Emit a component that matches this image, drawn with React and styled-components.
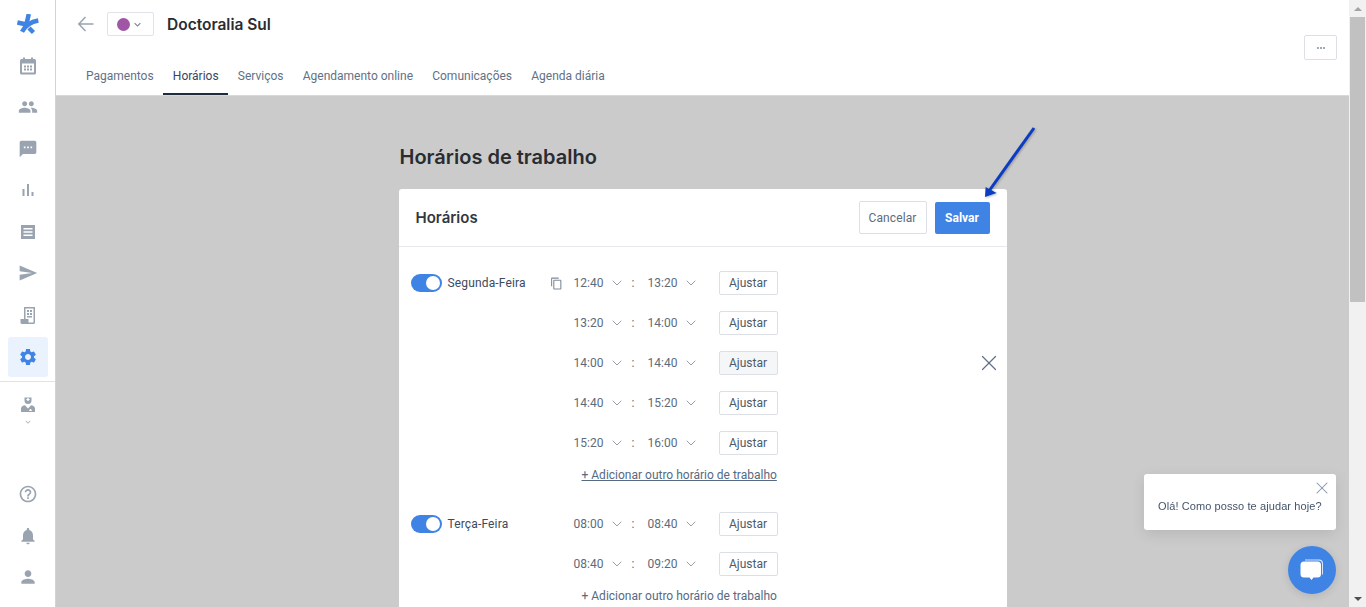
import React from "react";
import styled, { createGlobalStyle } from "styled-components";
import { ChevronDown, X } from "lucide-react";
import {
  MdContentCopy,
  MdExpandMore,
  MdHelpOutline,
  MdMoreHoriz,
  MdNotifications,
  MdPeople,
  MdPerson,
  MdSend,
  MdSettings,
  MdSms,
} from "react-icons/md";

const GlobalStyle = createGlobalStyle`
  html, body {
    margin: 0;
    height: 100%;
    overflow: hidden;
  }

  body {
    font-family: Roboto, "Liberation Sans", sans-serif;
    color: #2b3a4d;
    background: #fff;
  }

  * {
    box-sizing: border-box;
  }
`;

const Page = styled.div`
  display: flex;
  width: 1366px;
  height: 607px;
  overflow: hidden;
`;

const Sidebar = styled.nav`
  display: flex;
  flex: 0 0 56px;
  flex-direction: column;
  height: 607px;
  padding-top: 3.5px;
  background: #fff;
  border-right: 1px solid #d4d4d4;
`;

const NavItem = styled.a`
  display: flex;
  flex: 0 0 41.5px;
  align-items: center;
  justify-content: center;
  width: 40px;
  margin-left: 8px;
  border-radius: 3px;
  color: ${(p) => (p.$active ? "#3f83e4" : "#9aa4b1")};
  background: ${(p) => (p.$active ? "#eaf2fe" : "transparent")};
  font-size: 20px;
`;

const SettingsItem = styled(NavItem)`
  flex-basis: 40px;
  margin-top: 1px;
`;

const Divider = styled.div`
  flex: none;
  height: 1px;
  margin-top: 4px;
  background: #dfe2e6;
`;

const DoctorBlock = styled.div`
  display: flex;
  flex: none;
  flex-direction: column;
  align-items: center;
  height: 50px;
  padding-top: 14px;
  color: #9aa4b1;
`;

const TinyChevron = styled(MdExpandMore)`
  margin-top: 3px;
  font-size: 10px;
  color: #b4bbc4;
`;

const SidebarBottom = styled.div`
  display: flex;
  flex-direction: column;
  margin-top: auto;
  padding-bottom: 9px;
`;

const Main = styled.main`
  position: relative;
  display: flex;
  flex: 1;
  flex-direction: column;
  min-width: 0;
  background: #cbcbcb;
`;

const Header = styled.header`
  position: relative;
  flex: 0 0 96px;
  padding: 12px 0 0 20px;
  background: #fff;
  border-bottom: 1px solid #d9d9d9;
`;

const TitleRow = styled.div`
  display: flex;
  align-items: center;
  height: 24px;
`;

const ColorPicker = styled.div`
  display: flex;
  align-items: center;
  width: 47px;
  height: 24px;
  margin-left: 11px;
  padding-left: 9px;
  border: 1px solid #e1e3e8;
  border-radius: 2px;
  color: #77838f;
  font-size: 13px;
`;

const ColorDot = styled.span`
  width: 13px;
  height: 13px;
  margin-right: 1px;
  border-radius: 50%;
  background: ${(p) => p.$color};
`;

const Title = styled.h1`
  margin: 0 0 0 13px;
  color: #2a2c30;
  font-family: Inter, sans-serif;
  font-size: 15.5px;
  font-weight: 600;
`;

const Tabs = styled.div`
  display: flex;
  height: 37px;
  margin-top: 22px;
  margin-left: 0.4px;
`;

const Tab = styled.a`
  display: flex;
  align-items: center;
  height: 37px;
  padding: 0 9.6px;
  color: ${(p) => (p.$active ? "#33475f" : "#5f7186")};
  font-size: 12px;
  border-bottom: 2px solid ${(p) => (p.$active ? "#1f2c3d" : "transparent")};
`;

const MoreButton = styled.button`
  position: absolute;
  top: 35px;
  right: 12px;
  display: flex;
  align-items: center;
  justify-content: center;
  width: 33px;
  height: 25px;
  padding: 0;
  background: #fff;
  border: 1px solid #dedfe4;
  border-radius: 2px;
  color: #8d97a3;
  font-size: 12px;
`;

const Content = styled.div`
  flex: 1;
  width: 608px;
  margin: 0 auto;
  padding-top: 49px;
  overflow: hidden;
`;

const Heading = styled.h2`
  margin: 0 0 19px 1px;
  height: 25px;
  color: #2a2c30;
  font-family: Inter, sans-serif;
  font-size: 20px;
  font-weight: 600;
  line-height: 25px;
`;

const Card = styled.section`
  background: #fff;
  border-radius: 3px;
`;

const CardHeader = styled.div`
  display: flex;
  align-items: center;
  justify-content: space-between;
  height: 58px;
  padding: 0 17px;
  border-bottom: 1px solid #e7e9ec;
`;

const CardTitle = styled.h3`
  margin: 0;
  color: #33373d;
  font-family: Inter, sans-serif;
  font-size: 15px;
  font-weight: 600;
`;

const CardActions = styled.div`
  display: flex;
  gap: 8px;
  align-items: center;
`;

const CancelButton = styled.button`
  width: 68px;
  height: 33px;
  padding: 0;
  background: #fff;
  border: 1px solid #dcdfe5;
  border-radius: 2px;
  color: #5d6b7b;
  font-family: inherit;
  font-size: 12px;
  letter-spacing: 0.1px;
`;

const SaveButton = styled.button`
  width: 55px;
  height: 32px;
  padding: 0;
  background: #3f83e4;
  border: none;
  border-radius: 2px;
  color: #fff;
  font-family: inherit;
  font-size: 12px;
  font-weight: 700;
`;

const CardBody = styled.div`
  padding: 16px 11px 40px 12px;
`;

const DayGroup = styled.div`
  margin-bottom: 21px;
`;

const Row = styled.div`
  display: flex;
  align-items: center;
  height: 40px;
`;

const DayCell = styled.div`
  display: flex;
  flex: 0 0 139px;
  align-items: center;
  gap: 6px;
  color: #3d4a5a;
  font-size: 12px;
  letter-spacing: 0.15px;
`;

const Toggle = styled.span`
  position: relative;
  display: block;
  width: 31px;
  height: 18px;
  border-radius: 9px;
  background: #3f83e4;

  &::after {
    content: "";
    position: absolute;
    top: 2px;
    right: 2px;
    width: 14px;
    height: 14px;
    border-radius: 50%;
    background: #fff;
  }
`;

const CopyCell = styled.div`
  display: flex;
  flex: 0 0 24px;
  align-items: center;
  color: #7f8b99;
  font-size: 13px;
`;

const EmptyLead = styled.div`
  flex: 0 0 ${(p) => p.$width}px;
`;

const TimeSelect = styled.div`
  display: flex;
  flex: 0 0 57px;
  align-items: center;
  justify-content: space-between;
  padding-right: 5.5px;
  color: #5d6b7b;
  font-size: 12px;
`;

const SelectChevron = styled(ChevronDown)`
  color: #7f8b99;
`;

const Colon = styled.span`
  flex: 0 0 17px;
  padding-left: 1px;
  color: #5d6b7b;
  font-size: 12px;
`;

const AdjustButton = styled.button`
  width: 59px;
  height: 24px;
  margin-left: 14px;
  padding: 0;
  background: ${(p) => (p.$hover ? "#f5f6f8" : "#fff")};
  border: 1px solid #dcdfe5;
  border-radius: 2px;
  color: #4c5a6a;
  font-family: inherit;
  font-size: 12px;
`;

const RemoveIcon = styled(X)`
  margin-left: auto;
  margin-right: -6px;
  color: #5d6f86;
`;

const AddLink = styled.a`
  display: block;
  margin: 4px 0 0 171px;
  color: #566a82;
  font-size: 12px;
  line-height: 16px;
  text-decoration: ${(p) => (p.$hover ? "underline" : "none")};
`;

const Scrollbar = styled.div`
  display: flex;
  flex: 0 0 17px;
  flex-direction: column;
  height: 607px;
  background: #f1f1f1;
`;

const ScrollArrow = styled.div`
  flex: 0 0 17px;
  display: flex;
  align-items: center;
  justify-content: center;

  &::before {
    content: "";
    border-left: 4px solid transparent;
    border-right: 4px solid transparent;
    ${(p) => (p.$down ? "border-top: 4px solid #505050;" : "border-bottom: 4px solid #a3a3a3;")}
  }
`;

const ScrollTrack = styled.div`
  flex: 1;
  padding-left: 1px;
`;

const ScrollThumb = styled.div`
  width: 15px;
  height: 285px;
  background: #c1c1c1;
`;

const ArrowOverlay = styled.svg`
  position: absolute;
  top: 124px;
  left: 980px;
  width: 60px;
  height: 78px;
  pointer-events: none;
  filter: drop-shadow(1px 1px 1px rgba(0, 0, 0, 0.25));
`;

const ChatBubble = styled.div`
  position: fixed;
  top: 474px;
  left: 1144px;
  display: flex;
  align-items: center;
  width: 192px;
  height: 56px;
  padding: 8px 0 0 14px;
  background: #fff;
  border-radius: 3px;
  box-shadow: 0 4px 14px rgba(0, 0, 0, 0.1);
  color: #45546a;
  font-family: "Liberation Sans", Arial, sans-serif;
  font-size: 11px;
  letter-spacing: 0.09px;
`;

const ChatClose = styled(X)`
  position: absolute;
  top: 4px;
  right: 4px;
  color: #7f93ab;
`;

const ChatButton = styled.div`
  position: fixed;
  top: 546px;
  left: 1288px;
  display: flex;
  align-items: center;
  justify-content: center;
  width: 48px;
  height: 48px;
  border-radius: 50%;
  background: #3f83e4;
  box-shadow: 0 2px 8px rgba(0, 0, 0, 0.12);
`;

const Logo = () => (
  <svg width="22" height="21" viewBox="0 1 22 21" fill="none" stroke="#3f83e4" strokeWidth="4.5">
    <path d="M11.800 1L9.500 11" />
    <path d="M0.400 9.500L9.500 11.500" />
    <path d="M21.300 7.500Q10 9.500 5 18.700" />
    <path d="M12 15L16.500 19.500" />
  </svg>
);

const BackArrow = () => (
  <svg width="20" height="20" viewBox="0 0 20 20" fill="none" stroke="#9aa4b1" strokeWidth="1.500">
    <path d="M17.500 10H3M9.500 3L2.800 10l6.700 7" />
  </svg>
);

const CalendarIcon = () => (
  <svg width="20" height="20" viewBox="0 0 20 20" fill="currentColor">
    <path
      d="M5 1.500h2V3h6V1.500h2V3h1.500A1.500 1.500 0 0 1 18 4.500V17a1.500 1.500 0 0 1-1.500 1.500h-13A1.500 1.500 0 0 1 2 17V4.500A1.500 1.500 0 0 1 3.500 3H5zM4 7.500V16.500h12V7.500zM6 9.500h2v2H6zm3 0h2v2H9zm3 0h2v2h-2zM6 12.500h2v2H6zm3 0h2v2H9zm3 0h2v2h-2z"
      fillRule="evenodd"
    />
  </svg>
);

const BarsIcon = () => (
  <svg width="20" height="20" viewBox="0 0 20 20" fill="currentColor">
    <path d="M4.500 9h2v7h-2zM9 4h2v12H9zM13.500 12h2v4h-2z" />
  </svg>
);

const ReceiptIcon = () => (
  <svg width="20" height="20" viewBox="0 0 20 20" fill="currentColor">
    <path d="M3 3h14v14H3zM5.500 6v1.500h9V6zm0 3.200v1.500h9V9.200zm0 3.300V14h9v-1.500z" fillRule="evenodd" />
  </svg>
);

const BuildingIcon = () => (
  <svg width="20" height="20" viewBox="0 0 20 20" fill="currentColor">
    <path
      d="M6 2h11v15.500a1.500 1.500 0 0 1-1.500 1.500H4a1.500 1.500 0 0 1-1.500-1.500V14H6zm1.500 1.500V14h3v3.500h5v-14zM9 5h2v2H9zm3 0h2v2h-2zM9 8h2v2H9zm3 0h2v2h-2zM9 11h5v1.500H9z"
      fillRule="evenodd"
    />
  </svg>
);

const DoctorIcon = () => (
  <svg width="16" height="18" viewBox="0 0 16 18" fill="currentColor">
    <path
      d="M4.500 1.500h7v3a3.500 3.500 0 0 1-7 0zM7.300 2v1H6.400v.9h.9v1h1.400v-1h.9V3h-.9V2zM1 16v-3.500C1 10.500 3 9.500 5 9.200l3 3.300 3-3.300c2 .3 4 1.300 4 3.300V16zm9-3l-1 2h3l-1-2z"
      fillRule="evenodd"
    />
  </svg>
);

const ChatIcon = () => (
  <svg width="30" height="30" viewBox="0 0 30 30" fill="#fff">
    <path d="M8 4.500h14a4 4 0 0 1 4 4v11h-1V9a3.500 3.500 0 0 0-3.500-3.500H8z" opacity="0.8" />
    <path d="M7 6.500h13.500a3.500 3.500 0 0 1 3.500 3.500v9a3.500 3.500 0 0 1-3.500 3.500H16.500L14.500 25l-2-2.500H7A3.500 3.500 0 0 1 3.500 19v-9A3.500 3.500 0 0 1 7 6.500z" />
  </svg>
);

const TimeRow = ({ from, to, hover, children }) => (
  <Row>
    {children}
    <TimeSelect>
      {from}
      <SelectChevron size={16} strokeWidth={1.25} />
    </TimeSelect>
    <Colon>:</Colon>
    <TimeSelect>
      {to}
      <SelectChevron size={16} strokeWidth={1.25} />
    </TimeSelect>
    <AdjustButton $hover={hover}>Ajustar</AdjustButton>
    {hover && <RemoveIcon size={26} strokeWidth={1.1} />}
  </Row>
);

const Day = ({ name, slots, copyable, linkHover }) => (
  <DayGroup>
    {slots.map(([from, to, hover], index) => (
      <TimeRow key={from} from={from} to={to} hover={hover}>
        {index === 0 ? (
          <>
            <DayCell>
              <Toggle />
              {name}
            </DayCell>
            {copyable ? (
              <CopyCell>
                <MdContentCopy />
              </CopyCell>
            ) : (
              <EmptyLead $width={24} />
            )}
          </>
        ) : (
          <EmptyLead $width={163} />
        )}
      </TimeRow>
    ))}
    <AddLink $hover={linkHover}>+ Adicionar outro horário de trabalho</AddLink>
  </DayGroup>
);

const monday = [
  ["12:40", "13:20"],
  ["13:20", "14:00"],
  ["14:00", "14:40", true],
  ["14:40", "15:20"],
  ["15:20", "16:00"],
];

const tuesday = [
  ["08:00", "08:40"],
  ["08:40", "09:20"],
];

const tabs = ["Pagamentos", "Horários", "Serviços", "Agendamento online", "Comunicações", "Agenda diária"];

export default function App() {
  return (
    <Page>
      <GlobalStyle />
      <Sidebar>
        <NavItem><Logo /></NavItem>
        <NavItem><CalendarIcon /></NavItem>
        <NavItem><MdPeople /></NavItem>
        <NavItem><MdSms /></NavItem>
        <NavItem><BarsIcon /></NavItem>
        <NavItem><ReceiptIcon /></NavItem>
        <NavItem><MdSend /></NavItem>
        <NavItem><BuildingIcon /></NavItem>
        <SettingsItem $active><MdSettings /></SettingsItem>
        <Divider />
        <DoctorBlock>
          <DoctorIcon />
          <TinyChevron />
        </DoctorBlock>
        <SidebarBottom>
          <NavItem><MdHelpOutline /></NavItem>
          <NavItem><MdNotifications /></NavItem>
          <NavItem><MdPerson /></NavItem>
        </SidebarBottom>
      </Sidebar>
      <Main>
        <Header>
          <TitleRow>
            <BackArrow />
            <ColorPicker>
              <ColorDot $color="#a055a5" />
              <MdExpandMore />
            </ColorPicker>
            <Title>Doctoralia Sul</Title>
          </TitleRow>
          <Tabs>
            {tabs.map((tab) => (
              <Tab key={tab} $active={tab === "Horários"}>{tab}</Tab>
            ))}
          </Tabs>
          <MoreButton><MdMoreHoriz /></MoreButton>
        </Header>
        <Content>
          <Heading>Horários de trabalho</Heading>
          <Card>
            <CardHeader>
              <CardTitle>Horários</CardTitle>
              <CardActions>
                <CancelButton>Cancelar</CancelButton>
                <SaveButton>Salvar</SaveButton>
              </CardActions>
            </CardHeader>
            <CardBody>
              <Day name="Segunda-Feira" slots={monday} copyable linkHover />
              <Day name="Terça-Feira" slots={tuesday} />
            </CardBody>
          </Card>
        </Content>
      </Main>
      <Scrollbar>
        <ScrollArrow />
        <ScrollTrack><ScrollThumb /></ScrollTrack>
        <ScrollArrow $down />
      </Scrollbar>
      <ArrowOverlay viewBox="0 0 60 78">
        <path d="M54 4L9 67" stroke="#0b3cc4" strokeWidth="3" fill="none" />
        <path d="M5 73l.6-10 11 6z" fill="#0b3cc4" />
      </ArrowOverlay>
      <ChatBubble>
        Olá! Como posso te ajudar hoje?
        <ChatClose size={20} strokeWidth={1.25} />
      </ChatBubble>
      <ChatButton><ChatIcon /></ChatButton>
    </Page>
  );
}
